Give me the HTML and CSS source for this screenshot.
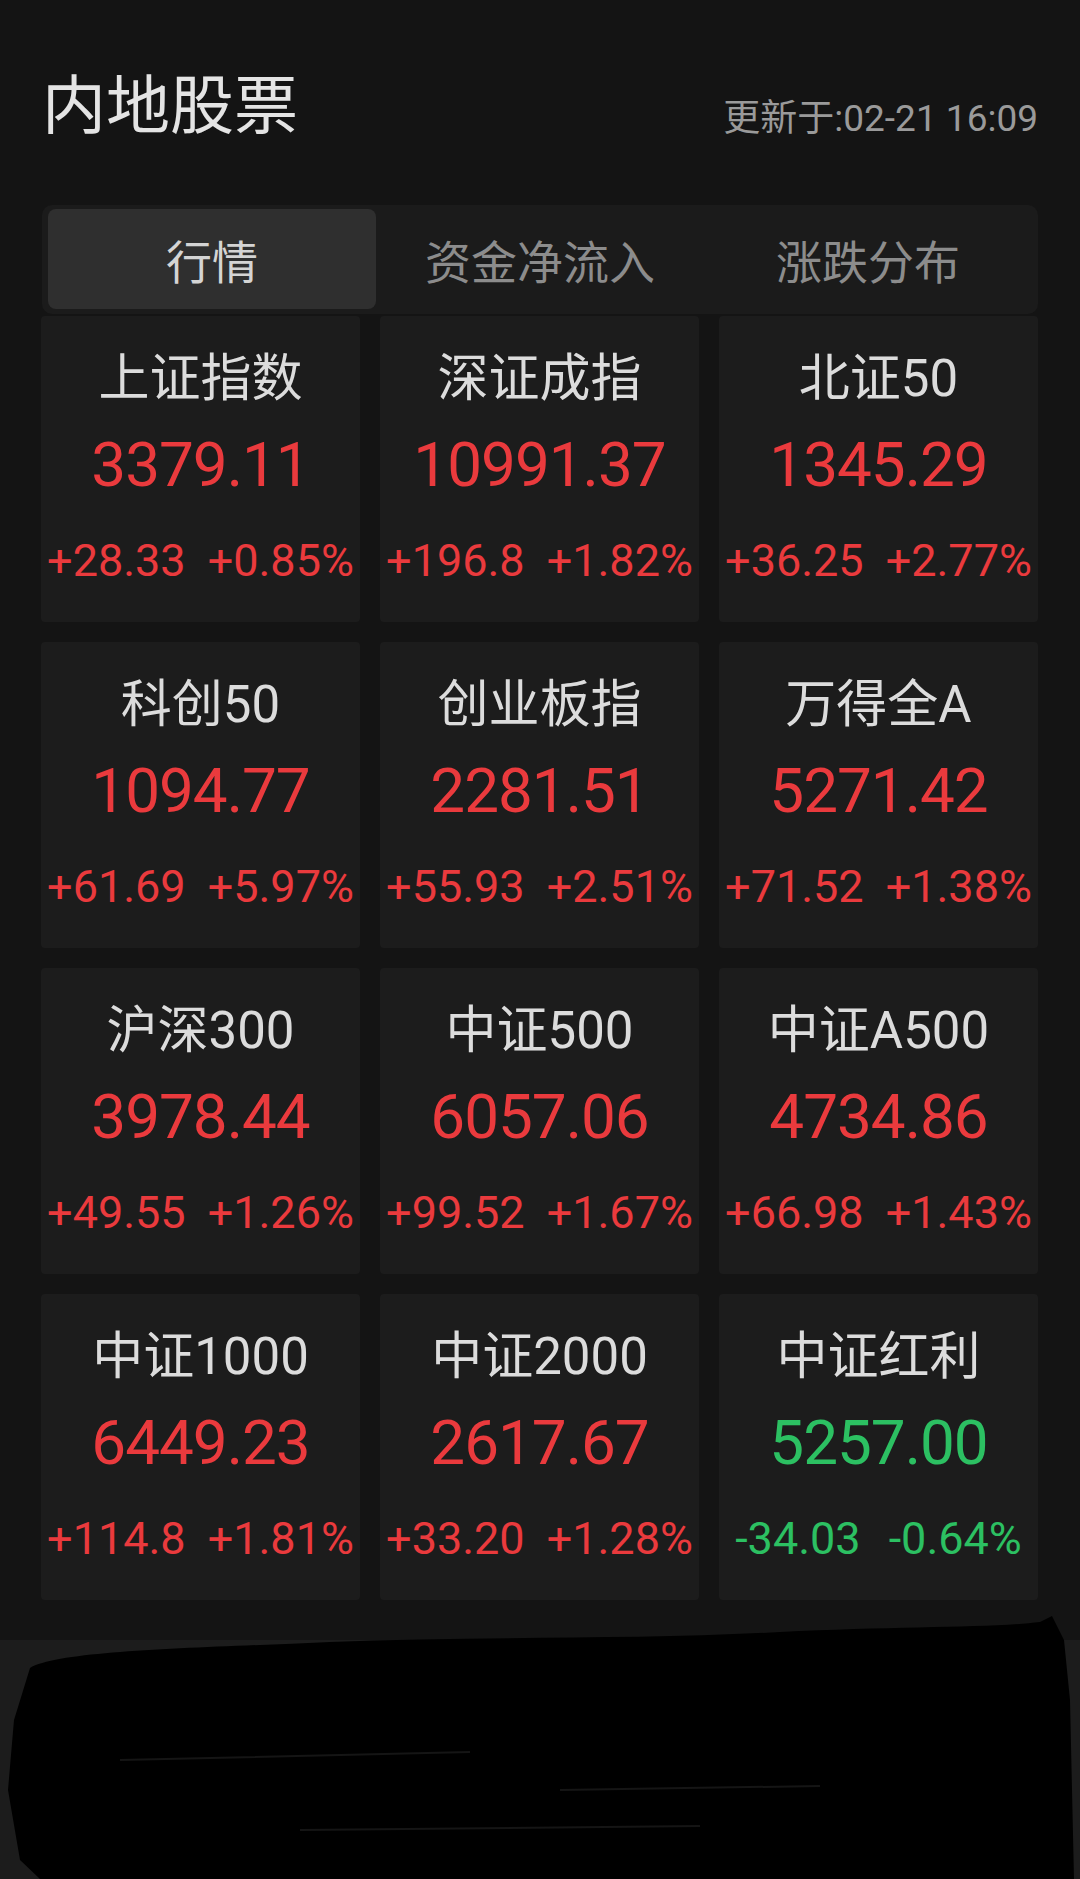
FILE: index.html
```html
<!DOCTYPE html>
<html lang="zh-CN">
<head>
<meta charset="utf-8">
<title>内地股票</title>
<link rel="stylesheet" href="styles.css">
</head>
<body>
<div class="page">
  <header class="header">
    <h1 class="title">内地股票</h1>
    <div class="stamp">更新于:02-21 16:09</div>
  </header>

  <nav class="tabs">
    <div class="tab active">行情</div>
    <div class="tab">资金净流入</div>
    <div class="tab">涨跌分布</div>
  </nav>

  <section class="grid">
    <div class="card up"><div class="name">上证指数</div><div class="value">3379.11</div><div class="chg"><span>+28.33</span><span>+0.85%</span></div></div>
    <div class="card up"><div class="name">深证成指</div><div class="value">10991.37</div><div class="chg"><span>+196.8</span><span>+1.82%</span></div></div>
    <div class="card up"><div class="name">北证50</div><div class="value">1345.29</div><div class="chg"><span>+36.25</span><span>+2.77%</span></div></div>

    <div class="card up"><div class="name">科创50</div><div class="value">1094.77</div><div class="chg"><span>+61.69</span><span>+5.97%</span></div></div>
    <div class="card up"><div class="name">创业板指</div><div class="value">2281.51</div><div class="chg"><span>+55.93</span><span>+2.51%</span></div></div>
    <div class="card up"><div class="name">万得全A</div><div class="value">5271.42</div><div class="chg"><span>+71.52</span><span>+1.38%</span></div></div>

    <div class="card up"><div class="name">沪深300</div><div class="value">3978.44</div><div class="chg"><span>+49.55</span><span>+1.26%</span></div></div>
    <div class="card up"><div class="name">中证500</div><div class="value">6057.06</div><div class="chg"><span>+99.52</span><span>+1.67%</span></div></div>
    <div class="card up"><div class="name">中证A500</div><div class="value">4734.86</div><div class="chg"><span>+66.98</span><span>+1.43%</span></div></div>

    <div class="card up"><div class="name">中证1000</div><div class="value">6449.23</div><div class="chg"><span>+114.8</span><span>+1.81%</span></div></div>
    <div class="card up"><div class="name">中证2000</div><div class="value">2617.67</div><div class="chg"><span>+33.20</span><span>+1.28%</span></div></div>
    <div class="card down"><div class="name">中证红利</div><div class="value">5257.00</div><div class="chg"><span>-34.03</span><span>-0.64%</span></div></div>
  </section>
</div>

<footer class="footer">
  <svg class="scribble" width="1080" height="264" viewBox="0 1615 1080 264" aria-hidden="true">
    <path d="M30 1668 C60 1650 200 1648 330 1642 C480 1636 640 1640 780 1632 C900 1626 990 1628 1040 1622 L1052 1616 L1064 1640 L1070 1700 L1074 1879 L40 1879 L20 1860 L8 1790 L14 1720 Z" fill="#000"/>
    <path d="M120 1760 L470 1752 M560 1790 L820 1786 M300 1830 L700 1826" stroke="#151515" stroke-width="2" fill="none"/>
  </svg>
</footer>
</body>
</html>
```

FILE: styles.css
```css
* { box-sizing: border-box; }

html, body {
  margin: 0;
  padding: 0;
  background: #141414;
}

body {
  width: 1080px;
  height: 1879px;
  overflow: hidden;
  font-family: "Roboto", "Noto Sans CJK SC", sans-serif;
  color: #dedede;
}

.page {
  padding: 0 42px 0 41px;
  height: 1640px;
}

.header {
  height: 205px;
  display: flex;
  justify-content: space-between;
  align-items: flex-start;
}

.title {
  margin: 62px 0 0 1px;
  font-family: "Noto Sans CJK SC", sans-serif;
  font-weight: 400;
  font-size: 64px;
  line-height: 76px;
  color: #e4e4e4;
}

.stamp {
  margin-top: 97px;
  font-size: 37px;
  line-height: 44px;
  color: #9a9a9a;
  white-space: nowrap;
}

.tabs {
  margin-left: 1px;
  height: 109px;
  background: #1b1b1b;
  border-radius: 10px;
  padding: 4px 6px 5px;
  display: grid;
  grid-template-columns: repeat(3, 1fr);
}

.tab {
  display: flex;
  align-items: center;
  justify-content: center;
  font-family: "Noto Sans CJK SC", sans-serif;
  font-size: 46px;
  color: #8c8c8c;
  border-radius: 8px;
}

.tab.active {
  background: #2f2f2f;
  color: #d4d4d4;
}

.grid {
  margin-top: 2px;
  display: grid;
  grid-template-columns: repeat(3, 319px);
  grid-auto-rows: 306px;
  column-gap: 20px;
  row-gap: 20px;
}

.card {
  background: #1c1c1c;
  border-radius: 4px;
  display: flex;
  flex-direction: column;
  align-items: center;
  padding-top: 33px;
}

.name {
  font-size: 51px;
  line-height: 60px;
  color: #dcdcdc;
  white-space: nowrap;
}

.value {
  margin-top: 21px;
  font-size: 62px;
  line-height: 70px;
  letter-spacing: -1px;
  white-space: nowrap;
}

.chg {
  margin-top: 36px;
  display: flex;
  gap: 22px;
  font-size: 45px;
  line-height: 50px;
  white-space: nowrap;
}

.up .value, .up .chg { color: #ea3a3d; }
.down .value, .down .chg { color: #2cc062; }
.down .chg { gap: 28px; }

.footer {
  position: relative;
  height: 239px;
  background: #1c1c1c;
}

.scribble {
  position: absolute;
  left: 0;
  top: -25px;
  display: block;
}
```
